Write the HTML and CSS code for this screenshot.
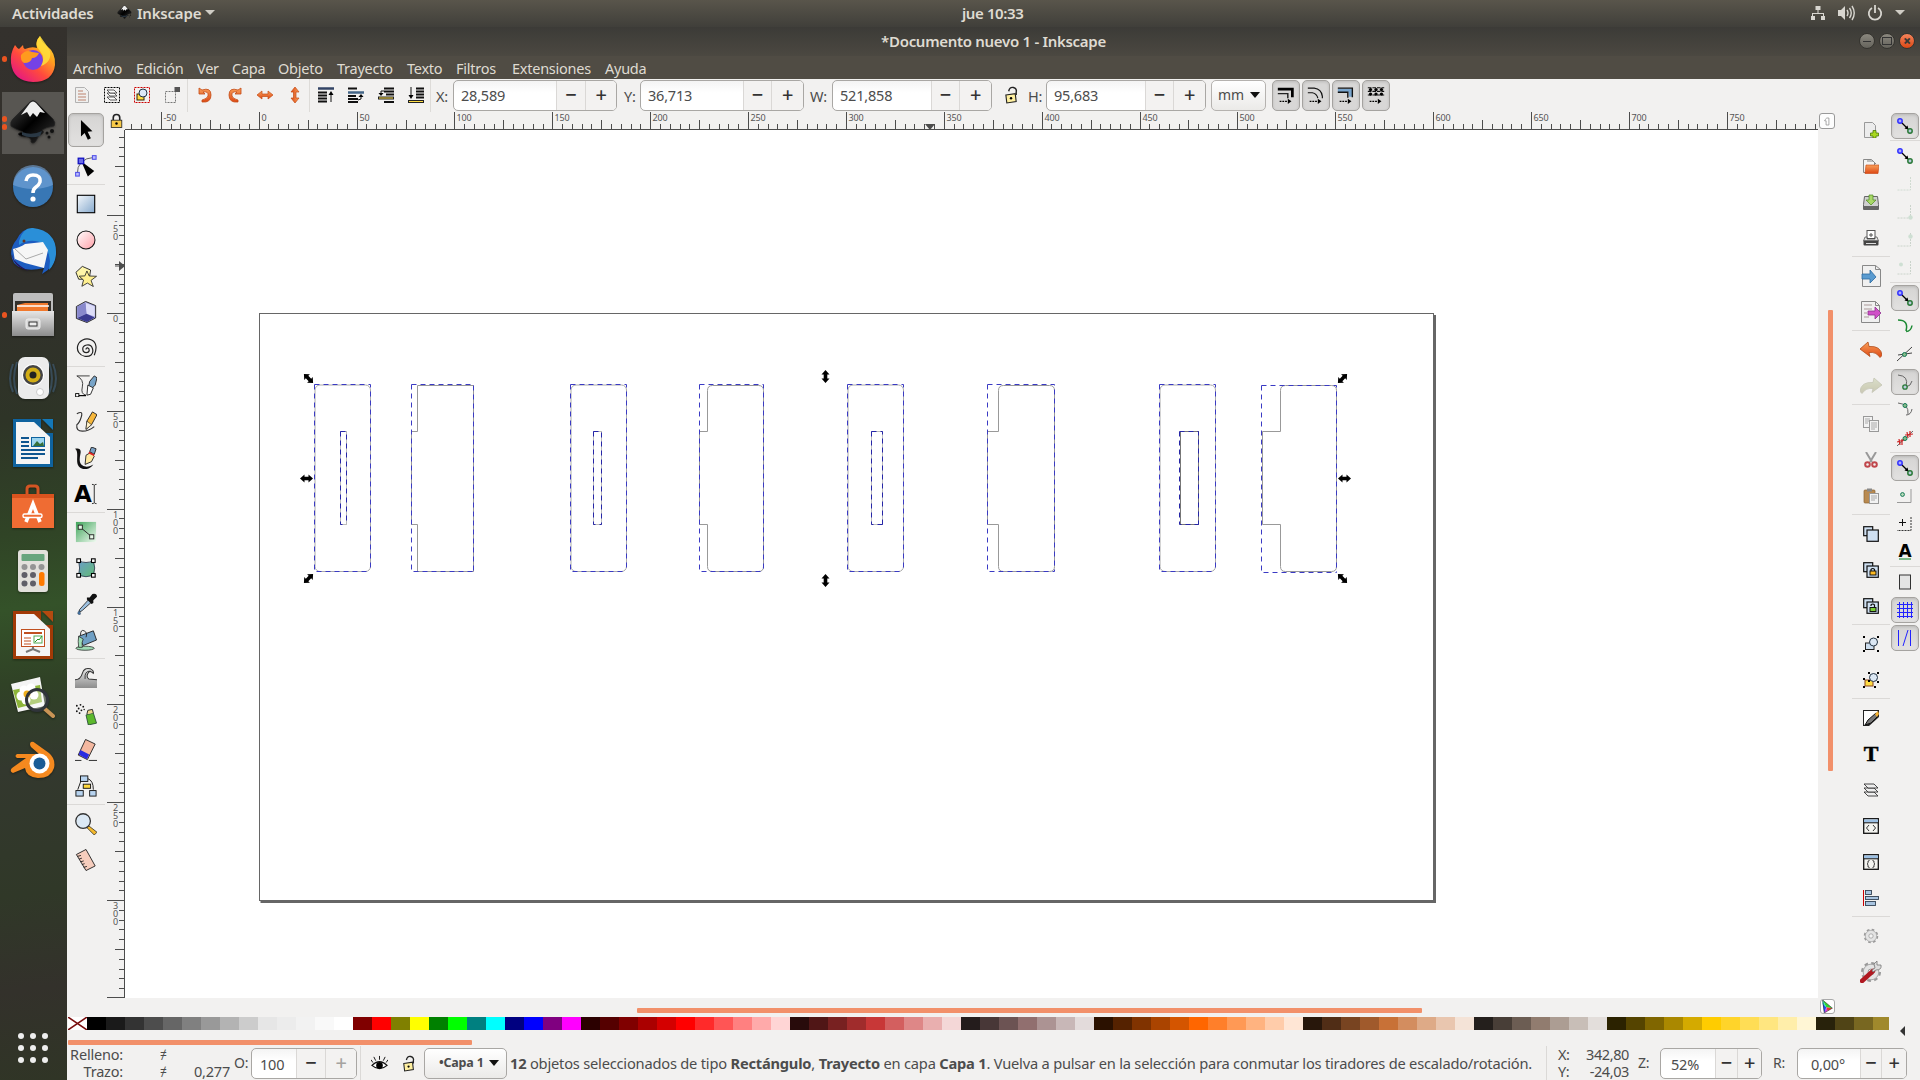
FILE: index.html
```html
<!DOCTYPE html>
<html lang="es">
<head>
<meta charset="utf-8">
<title>*Documento nuevo 1 - Inkscape</title>
<link rel="stylesheet" href="styles.css">
</head>
<body>
<svg class="sprite" aria-hidden="true">
<defs>
<linearGradient id="gBlue" x1="0" y1="0" x2="1" y2="1"><stop offset="0" stop-color="#f4f8fc"/><stop offset="1" stop-color="#86a9cd"/></linearGradient>
<linearGradient id="gPink" x1="0" y1="0" x2="1" y2="1"><stop offset="0" stop-color="#fff"/><stop offset="1" stop-color="#ffa0a8"/></linearGradient>
<linearGradient id="gGreen" x1="0" y1="0" x2="1" y2="1"><stop offset="0" stop-color="#3fa55a"/><stop offset="1" stop-color="#f0faf0"/></linearGradient>
<linearGradient id="gMesh" x1="0" y1="0" x2="1" y2="1"><stop offset="0" stop-color="#6a9cc8"/><stop offset="1" stop-color="#62bd74"/></linearGradient>
<linearGradient id="gOrange" x1="0" y1="0" x2="0" y2="1"><stop offset="0" stop-color="#f9a05a"/><stop offset="1" stop-color="#dd4814"/></linearGradient>
<linearGradient id="gGray" x1="0" y1="0" x2="0" y2="1"><stop offset="0" stop-color="#e6e6e6"/><stop offset="1" stop-color="#8c8c8c"/></linearGradient>
<linearGradient id="gFox" x1="1" y1="0" x2="0.2" y2="1"><stop offset="0" stop-color="#fff44f"/><stop offset=".35" stop-color="#ffa51e"/><stop offset=".65" stop-color="#ff4a3d"/><stop offset="1" stop-color="#e31587"/></linearGradient>
<linearGradient id="gInk" x1="0" y1="0" x2="1" y2="1"><stop offset="0" stop-color="#444"/><stop offset=".5" stop-color="#000"/><stop offset="1" stop-color="#333"/></linearGradient>
</defs>
<symbol id="s-cursor" viewBox="0 0 24 24"><path d="M6.500 1v18l4-3.800 3.500 7.300 3.300-1.500-3.500-7.200 5.200-.5z" fill="#000"/></symbol>
<symbol id="s-node" viewBox="0 0 24 24"><path d="M2.500 21Q2 4 21 2.500" fill="none" stroke="#555"/><path d="M7 7l14 10.500-7 6z" fill="#000"/><rect x="3.500" y="3.500" width="6" height="6" fill="#6a6ae8" stroke="#1010c0" stroke-width="1.400"/><rect x=".7" y="19" width="4" height="4" fill="#bbf" stroke="#5555e8" stroke-width="1.200"/><rect x="19" y=".7" width="4" height="4" fill="#bbf" stroke="#5555e8" stroke-width="1.200"/></symbol>
<symbol id="s-rect" viewBox="0 0 24 24"><rect x="2.500" y="2.500" width="19" height="19" fill="url(#gBlue)" stroke="#000" stroke-width="1.200"/></symbol>
<symbol id="s-circle" viewBox="0 0 24 24"><circle cx="12" cy="12" r="9.800" fill="url(#gPink)" stroke="#111" stroke-width="1.100"/></symbol>
<symbol id="s-star" viewBox="0 0 24 24"><path d="M1 8L8 1.500l9 4-1.500 10L4 15.500z" fill="#fff6a8" stroke="#222"/><path d="M13 6.500l2.500 5.500 8 .3-6 4.500 2.500 6.700-6.500-3.800-6 3.500 1.800-6.800-4.800-4.200 6.300-.3z" fill="#fff090" stroke="#222" stroke-width=".9"/></symbol>
<symbol id="s-cube" viewBox="0 0 24 24"><path d="M1.500 6l10-5.500 11 4.500v13.500L13 23.500 1.500 19z" fill="#a8a8e0" stroke="#222"/><path d="M11.500 2l10 4v11l-9-3z" fill="#ddddf8"/><path d="M2.500 6l9-4 1 12-10 4z" fill="#8888cc"/><path d="M12.500 14l9 4-8.500 5-10.500-4.500z" fill="#3a3a90"/></symbol>
<symbol id="s-spiral" viewBox="0 0 24 24"><path d="M12 13.500c0-2.500 3.500-2 3.500 1s-6.500 4-7-1 8.500-7.500 10.500-1-3 9.500-8.500 8.500-9-6-7.500-11.500S11 .5 17.500 3s6.500 10 3.500 17" fill="none" stroke="#222" stroke-width="1.300"/></symbol>
<symbol id="s-pen" viewBox="0 0 24 24"><path d="M2 1h14M2 1q8 4 6 12t4 9" fill="none" stroke="#333"/><path d="M15 12l1-5 5-6 3 2-2 8-4 4z" fill="#78a4c8" stroke="#222"/><path d="M14 11l6 3-3 7-4 1z" fill="#fff" stroke="#222"/><path d="M3 22.500h9" stroke="#000" stroke-width="1.300"/><rect x=".7" y="20.300" width="3.500" height="3.500" fill="#fff" stroke="#000"/></symbol>
<symbol id="s-pencil" viewBox="0 0 24 24"><path d="M2 3q7-4 5 3t-5 9q-1 7 6 7t13-5" fill="none" stroke="#333" stroke-width="1.200"/><path d="M12 20l1-9 6-10 5 3-6 11z" fill="#f6b73c" stroke="#222"/><path d="M12 20l1-9 5 4z" fill="#fff1c8" stroke="#222" stroke-width=".7"/></symbol>
<symbol id="s-calli" viewBox="0 0 24 24"><path d="M0 2c4-1 7 0 6 5s-2 10 2 13 9 1 12-1c-4 6-12 7-16 2S5 5 0 2z" fill="#111"/><path d="M11 19l1-10 5-3 4 4-3 6z" fill="#ffe9a0" stroke="#222"/><path d="M16 5l2-5 5 2-2 6z" fill="#7aa0c4" stroke="#222"/><path d="M15 6l6 3" stroke="#d22" stroke-width="2"/></symbol>
<symbol id="s-text" viewBox="0 0 24 24"><path d="M21 2.500v19M18.500 1.500q2 0 2.500 1 .5-1 2.500-1M18.500 22.500q2 0 2.500-1 .5 1 2.500 1" stroke="#222" fill="none"/></symbol>
<symbol id="s-grad" viewBox="0 0 24 24"><rect x="1" y="1" width="22" height="22" fill="url(#gGreen)"/><path d="M6 7l12 10" stroke="#222"/><rect x="3.500" y="4.500" width="4.500" height="4.500" fill="#e8f8e8" stroke="#222"/><rect x="16" y="15" width="4.500" height="4.500" fill="#e8f8e8" stroke="#222"/></symbol>
<symbol id="s-mesh" viewBox="0 0 24 24"><path d="M4 4q8 4 16 0 3 8 0 16-8 3-16 0 2-8 0-16" fill="url(#gMesh)" stroke="#345"/><g fill="#fff" stroke="#000" stroke-width="1.200"><rect x="2" y="2" width="4" height="4"/><rect x="18" y="2" width="4" height="4"/><rect x="2" y="18" width="4" height="4"/><rect x="18" y="18" width="4" height="4"/></g></symbol>
<symbol id="s-drop" viewBox="0 0 24 24"><path d="M5 18L15 7l3 3L8 19l-3 2z" fill="#9cc0e0" stroke="#222" stroke-width=".9"/><path d="M13 5l3 0 3-4q5-1 5 3l-4 4v3l-2 1-5-5z" fill="#111"/><path d="M4.500 19q-3 4 0 4.500t0-4.500" fill="#47a" stroke="#234" stroke-width=".5"/></symbol>
<symbol id="s-bucket" viewBox="0 0 24 24"><ellipse cx="11" cy="21" rx="10" ry="2.200" fill="#9fdcb4" stroke="#222" stroke-width=".8"/><path d="M4 8l16-6 3.500 10L9 18z" fill="#6f9fc4" stroke="#222"/><path d="M4 8q-1 5 0 12l4 0q-1-6 1-9z" fill="#9fdcb4" stroke="#222" stroke-width=".8"/><path d="M6 7q0-7 4-5t2 7" fill="none" stroke="#222"/></symbol>
<symbol id="s-tweak" viewBox="0 0 24 24"><path d="M0 23v-9q6 0 8-7t9-5q4 2 3 5-4-4-6 0t1 6l9 1v9z" fill="url(#gGray)"/><path d="M0 14q6 0 8-7t9-5q4 2 3 5-4-4-6 0t1 6l9 1" fill="none" stroke="#333" stroke-width="1.100"/><path d="M11 13q-1-9 6-8.500" fill="none" stroke="#333"/></symbol>
<symbol id="s-spray" viewBox="0 0 24 24"><path d="M12 13l8-2 3.500 11-9 2z" fill="#5cb82c" stroke="#243" stroke-width=".9"/><path d="M13 12l1-4 5-1 1 4" fill="#efd68a" stroke="#222"/><g fill="#111"><circle cx="2" cy="3" r="1"/><circle cx="6" cy="2" r="1"/><circle cx="9" cy="4" r="1"/><circle cx="4" cy="6" r="1"/><circle cx="2" cy="9" r="1"/><circle cx="7" cy="8" r="1"/><circle cx="10" cy="7" r=".8"/><circle cx="5" cy="11" r="1"/></g></symbol>
<symbol id="s-eraser" viewBox="0 0 24 24"><path d="M11.500.5l10.500 5-8.500 17-10-5z" fill="#f4b8a0" stroke="#222"/><path d="M6 12l9.500 5-2.500 5-9-5z" fill="#2a2ae0"/><path d="M0 23.400h7M15 23.400h9" stroke="#222"/></symbol>
<symbol id="s-conn" viewBox="0 0 24 24"><path d="M7 5L3 16M14 4q6 2 6 12" stroke="#111" fill="none"/><g stroke="#111" fill="#b7d3ef"><rect x="6" y="1" width="8" height="6"/><rect x="1" y="17" width="8" height="6"/><rect x="16" y="17" width="7" height="6"/><rect x="9" y="10" width="8" height="4.500" fill="#ffd83c"/></g></symbol>
<symbol id="s-zoom" viewBox="0 0 24 24"><path d="M15 14l9 7-3 3-8-8z" fill="#f4b92c" stroke="#222" stroke-width=".8"/><circle cx="8.800" cy="8.800" r="8" fill="#dbe8f4" stroke="#333" stroke-width="1.400"/></symbol>
<symbol id="s-ruler" viewBox="0 0 24 24"><path d="M1.500 6L12 .5l10 18-10 5z" fill="#f6cdbd" stroke="#222"/><path d="M3 8l3.500-1M4.500 11l3-1M6 14l3.500-1M7.500 17l3-1M9.500 20l3.500-1" stroke="#222"/></symbol>
<symbol id="s-new" viewBox="0 0 16 16"><path d="M1.500.5h8l3 3v12h-11z" fill="#ececec" stroke="#999"/><path d="M10 8.500h3v2.500h2.500v3H13v2h-3v-2H7.500v-3H10z" fill="#a8d820" stroke="#4a7a08" stroke-width=".8"/></symbol>
<symbol id="s-open" viewBox="0 0 16 16"><path d="M.5 1.500h8l3 3v10H.5z" fill="#f4f4f4" stroke="#888"/><path d="M4 3h6l3 3" stroke="#888" fill="none"/><path d="M3 7h13l-1 8.500H2z" fill="url(#gOrange)" stroke="#c8430e" stroke-width=".6"/></symbol>
<symbol id="s-save" viewBox="0 0 16 16"><path d="M1.500 2.500h13l1 8v5H.5v-5z" fill="#d0d0d0" stroke="#666"/><path d="M1 12h14v3H1z" fill="#666"/><path d="M6 1h4v5h3l-5 5-5-5h3z" fill="#a8d868" stroke="#4f8a20" stroke-width=".7"/></symbol>
<symbol id="s-print" viewBox="0 0 16 16"><rect x="4" y=".5" width="8" height="8" fill="#fff" stroke="#555"/><path d="M8 3v4M6 5h4" stroke="#555"/><path d="M2 7h2v2h8V7h2l1.500 4H.5z" fill="#e4e4e4" stroke="#444" stroke-width=".7"/><rect x=".5" y="10.500" width="15" height="5" rx="1" fill="#444"/><path d="M3 13.500h10" stroke="#ddd"/></symbol>
<symbol id="s-import" viewBox="0 0 20 22"><path d="M1.500.5h13l5 4v17h-18z" fill="#f0f0f0" stroke="#888"/><path d="M14.500.5v4h5" fill="none" stroke="#888"/><path d="M1 9h8V5l6 7-6 6v-4H1z" fill="#5a9bd0" stroke="#2c6aa0" stroke-width=".8"/></symbol>
<symbol id="s-export" viewBox="0 0 20 22"><path d="M.5.500h14l4 4v17H.500z" fill="#f0f0f0" stroke="#888"/><path d="M14.500.5v4h4" fill="none" stroke="#888"/><path d="M3 4h8M3 8h8M3 12h3M3 16h5" stroke="#a99"/><path d="M7 10h7V6l6 6-6 6v-4H7z" fill="#d050c8" stroke="#903090" stroke-width=".8"/></symbol>
<symbol id="s-undo" viewBox="0 0 22 16"><path d="M0 7l8-7 1 4.500q12-1 13 9l-2 2q-4-6-11-5l1 4z" fill="url(#gOrange)" stroke="#b04a18" stroke-width=".8"/></symbol>
<symbol id="s-copy" viewBox="0 0 16 16"><g fill="#f2f2f2" stroke="#999"><rect x=".5" y=".5" width="9" height="11"/><rect x="6.500" y="4.500" width="9" height="11"/></g><path d="M2 3h5M2 5h4M2 7h3M8 7h6M8 9h6M8 11h6M8 13h4" stroke="#aaa"/></symbol>
<symbol id="s-cut" viewBox="0 0 16 16"><path d="M3 0l6 10M13 0L7 10" stroke="#999" stroke-width="2"/><g fill="none" stroke="#c0474c" stroke-width="2"><circle cx="4.500" cy="12.500" r="2.300"/><circle cx="11.500" cy="12.500" r="2.300"/></g></symbol>
<symbol id="s-paste" viewBox="0 0 16 16"><rect x="1" y="2" width="11" height="13" rx="1" fill="#b98a50" stroke="#8a6230" stroke-width=".7"/><rect x="4" y=".5" width="5" height="3" fill="#888"/><rect x="6.500" y="5.500" width="9" height="10" fill="#f2f2f2" stroke="#999"/><path d="M8 8h6M8 10h6M8 12h4" stroke="#aaa"/></symbol>
<symbol id="s-dup" viewBox="0 0 16 16"><g fill="#cfe0f2" stroke="#111" stroke-width="1.200"><rect x=".7" y=".7" width="9" height="9"/><rect x="4" y="4" width="11.300" height="11.300"/></g></symbol>
<symbol id="s-clone" viewBox="0 0 16 16"><use href="#s-dup"/><path d="M8 9V7.500q1.800-2 3.500 0V9" fill="none" stroke="#111" stroke-width="1.200"/><rect x="7" y="9" width="6" height="4" fill="#fb2" stroke="#111"/></symbol>
<symbol id="s-unlink" viewBox="0 0 16 16"><use href="#s-dup"/><path d="M8 8V7q1.800-2 3.500 0V9" fill="none" stroke="#111" stroke-width="1.200"/><rect x="7" y="9.500" width="6" height="4" fill="#7c3" stroke="#111"/></symbol>
<symbol id="s-group" viewBox="0 0 16 16"><rect x="2.500" y="7" width="8.500" height="6.500" fill="#cde" stroke="#222"/><circle cx="10.500" cy="6" r="4" fill="#dce8f4" stroke="#234"/><path d="M0 0h2v2H0zM14 0h2v2h-2zM0 14h2v2H0zM14 14h2v2h-2z"/></symbol>
<symbol id="s-ungroup" viewBox="0 0 16 16"><rect x="2" y="8" width="8" height="6" fill="#fd4" stroke="#842"/><circle cx="10.500" cy="5.500" r="4" fill="#dce8f4" stroke="#234"/><path d="M0 6h2v2H0zM5 0h2v2H5zM14 0h2v2h-2zM0 14h2v2H0zM11 14h2v2h-2zM14 9h2v2h-2zM5 8h2v2H5z"/></symbol>
<symbol id="s-fill" viewBox="0 0 16 16"><rect width="16" height="16" fill="#222"/><path d="M1 1h14L5 14l-4 1z" fill="#fff"/><path d="M16 7v9H6z" fill="#f2f1f0"/><path d="M2 15l3-5 8-7 2 3-7 7z" fill="#777" stroke="#111" stroke-width="1"/><path d="M12 4l3-3 1 3-2 3z" fill="#f4b030"/></symbol>
<symbol id="s-layers" viewBox="0 0 16 14"><g fill="#eee" stroke="#333" stroke-width=".9"><path d="M1 9h10l4 4H5z"/><path d="M1 5h10l4 4H5z"/><path d="M1 1h10l4 4H5z"/></g></symbol>
<symbol id="s-xml" viewBox="0 0 16 16"><rect x=".7" y=".7" width="14.600" height="14.600" fill="#f4f4f0" stroke="#111" stroke-width="1.300"/><path d="M1 1.500h14v3H1z" fill="#9cc0e4"/><path d="M1 4.800h14" stroke="#111"/><path d="M6 7L3.500 10 6 13M10 7l2.500 3-2.500 3" fill="none" stroke="#333"/></symbol>
<symbol id="s-css" viewBox="0 0 16 16"><rect x=".7" y=".7" width="14.600" height="14.600" fill="#f4f4f0" stroke="#111" stroke-width="1.300"/><path d="M1 1.500h14v3H1z" fill="#9cc0e4"/><path d="M1 4.800h14" stroke="#111"/><path d="M6.500 6.500q-2 0-1.500 2 0 1-1 1.500 1 0 1 1.500-.5 2 1.500 2M9.500 6.500q2 0 1.500 2 0 1 1 1.500-1 0-1 1.500.5 2-1.500 2" fill="none" stroke="#333"/></symbol>
<symbol id="s-align" viewBox="0 0 16 16"><path d="M.5 0v16" stroke="#c00"/><g fill="#a8c4e0" stroke="#345" stroke-width=".9"><rect x="2.500" y=".5" width="6" height="4"/><rect x="2.500" y="6.500" width="13" height="3"/><rect x="2.500" y="11.500" width="10" height="4"/></g></symbol>
<symbol id="s-gear" viewBox="0 0 22 22"><circle cx="11" cy="11" r="8.500" fill="#e0e0e0" stroke="#999" stroke-width="3" stroke-dasharray="3.500 3.170"/><circle cx="11" cy="11" r="7.800" fill="#e4e4e4" stroke="#aaa"/><circle cx="11" cy="11" r="3" fill="#f4f4f4" stroke="#999"/></symbol>
<symbol id="s-prefs" viewBox="0 0 22 22"><use href="#s-gear"/><path d="M2 20L13 10" stroke="#b01820" stroke-width="4.500" stroke-linecap="round"/><path d="M12 9l3-2-1-4 3-3 0 4 4 0q1 5-5 5l-3 2z" fill="#ddd" stroke="#777" stroke-width=".8"/></symbol>
<symbol id="s-snap" viewBox="0 0 16 16"><path d="M4 4l7 7" stroke="#000" stroke-width="1.200"/><path d="M11.500 11.500l-4-1 3-3z"/><circle cx="3" cy="3" r="2.200" fill="#aaf" stroke="#33f" stroke-width="1.500"/><circle cx="13" cy="13" r="2.200" fill="#bcd" stroke="#2a7a38" stroke-width="1.500"/></symbol>
<symbol id="s-bb1" viewBox="0 0 16 16"><path d="M13.500 1v13H0" fill="none" stroke="#a9c2ad" stroke-dasharray="2 1"/></symbol>
<symbol id="s-bb2" viewBox="0 0 16 16"><path d="M13.500 1v13H0" fill="none" stroke="#9bb09f" stroke-dasharray="2 1"/><circle cx="13.500" cy="13.500" r="2.200" fill="#a4cbb0"/></symbol>
<symbol id="s-bb3" viewBox="0 0 16 16"><path d="M13.500 1v13H0" fill="none" stroke="#9bb09f" stroke-dasharray="2 1"/><circle cx="13.500" cy="4.500" r="2.200" fill="#a4cbb0"/></symbol>
<symbol id="s-bb4" viewBox="0 0 16 16"><path d="M13.500 1v13H0" fill="none" stroke="#9bb09f" stroke-dasharray="2 1"/><circle cx="4" cy="4.500" r="2" fill="#a4cbb0"/></symbol>
<symbol id="s-path" viewBox="0 0 16 16"><path d="M1 2q11 0 8 11M9 13.500q5 0 6-6" fill="none" stroke="#1c8a34" stroke-width="1.500"/></symbol>
<symbol id="s-inter" viewBox="0 0 16 16"><path d="M0 15L15 1M1 9l14-2" stroke="#444" fill="none"/><circle cx="7.500" cy="8.500" r="2" fill="#8b8" stroke="#175" /></symbol>
<symbol id="s-cusp" viewBox="0 0 16 16"><path d="M1 1q11 1 8 11M9 13q5-1 6-6" fill="none" stroke="#666"/><circle cx="8" cy="13" r="2.200" fill="#bcd" stroke="#2a7a38" stroke-width="1.300"/></symbol>
<symbol id="s-smooth" viewBox="0 0 16 16"><path d="M1 1q11 1 10 11M9 13q5 0 6-6" fill="none" stroke="#666"/><circle cx="8" cy="3.500" r="2" fill="#8b8" stroke="#175"/></symbol>
<symbol id="s-mid" viewBox="0 0 16 16"><path d="M0 16L16 1" stroke="#666"/><path d="M2 9l1 6M5 9l0 6M10 2l1 6M13 1l0 6M0 12l7-2M8 5l8-1" stroke="#c22" stroke-width="1.200"/><circle cx="8" cy="8.500" r="2" fill="#8b8" stroke="#175"/></symbol>
<symbol id="s-center" viewBox="0 0 16 16"><path d="M14 1v13.500H0" fill="none" stroke="#999"/><circle cx="5.500" cy="6.500" r="1.900" fill="#bdb" stroke="#175"/></symbol>
<symbol id="s-rot" viewBox="0 0 16 16"><path d="M14 1v13.500H0" fill="none" stroke="#333" stroke-dasharray="2 1"/><path d="M5.500 3v7M2 6.500h7" stroke="#111"/></symbol>
<symbol id="s-page" viewBox="0 0 16 16"><rect x="2.500" y="1" width="11" height="14" fill="#e4e4e4" stroke="#333"/></symbol>
<symbol id="s-grid" viewBox="0 0 16 16"><path d="M2.500 0v16M6.500 0v16M10.500 0v16M14.500 0v16M0 2.500h16M0 6.500h16M0 10.500h16M0 14.500h16" stroke="#22f"/></symbol>
<symbol id="s-guide" viewBox="0 0 16 16"><path d="M1.500 0v16M13.500 0v16M11 0L6 16" stroke="#22f" fill="none"/></symbol>
<symbol id="s-rotl" viewBox="0 0 16 16"><path d="M2 1v6h6L6 5q6-1 5 4-1 3-6 4v2q9 1 9-7T5 3z" fill="url(#gOrange)" stroke="#c44a14" stroke-width=".8"/></symbol>
<symbol id="s-flip" viewBox="0 0 16 16"><path d="M0 8l5-4v3h6V4l5 4-5 4V9.500H5V12z" fill="url(#gOrange)" stroke="#c44a14" stroke-width=".7"/></symbol>
<symbol id="s-sh" viewBox="0 0 22 22"><path d="M4 18h9" stroke="#000" stroke-width="1.300" stroke-dasharray="2 1"/><path d="M13 15l4 3-4 3z"/></symbol>
<symbol id="s-lock" viewBox="0 0 16 18"><path d="M4 8V5q0-4 4-4t4 4v3" fill="none" stroke="#222" stroke-width="2"/><rect x="1.500" y="8" width="13" height="9" fill="#f7c948" stroke="#222"/><circle cx="8" cy="12" r="1.500"/></symbol>
<symbol id="s-unlock" viewBox="0 0 16 18"><path d="M5 5q1-5 5-4t3 5v3" fill="none" stroke="#222" stroke-width="1.500"/><path d="M2 9l10-1.500 1 8.500-10 1.500z" fill="#fff0a0" stroke="#222" stroke-width="1.200"/><circle cx="7.500" cy="12.500" r="1.300"/></symbol>
<symbol id="s-ink" viewBox="0 0 48 48"><path d="M21 3q3-3 6 0l17 17q3 4 1 7-8 1-12 4 3 2 0 4-4 1-5 5-3 6-6 3 1-4-4-5-7 0-9-3 2-2 5-2-8-3-12-6-1-4 2-7z" fill="url(#gInk)" stroke="#222" stroke-width=".7"/><path d="M21 4q3-3 6 0l9 10-5-1-3 5-4-4-3 4-3-5-6 3z" fill="#eee"/><path d="M13 33q10 4 20-1l-2 5q-10 3-18-1z" fill="#2a3844"/><circle cx="38" cy="34" r="1.500" fill="#111"/><circle cx="43" cy="32" r="2" fill="#111"/><circle cx="40" cy="38" r="1.500" fill="#111"/></symbol>
</svg>

<header class="panel">
  <span class="activities">Actividades</span>
  <svg class="app-ink"><use href="#s-ink"/></svg>
  <span class="app-name">Inkscape</span><i class="tri"></i>
  <span class="clock">jue 10:33</span>
  <div class="tray">
    <svg width="16" height="16" viewBox="0 0 16 16"><path d="M5.500 1h5v4h-5zM1 11h4v4H1zM11 11h4v4h-4zM7.500 5h1v3H14v3h-1V9H3v2H2V8h5.500z" fill="#d8d6d0"/></svg>
    <svg width="17" height="16" viewBox="0 0 17 16"><path d="M0 5h3l4-4v14l-4-4H0z" fill="#d8d6d0"/><path d="M9 5q2 3 0 6M11.500 3q3.500 5 0 10M14 1q4.500 7 0 14" fill="none" stroke="#d8d6d0" stroke-width="1.400"/></svg>
    <svg width="16" height="16" viewBox="0 0 16 16"><path d="M5 3a6.200 6.200 0 1 0 6 0M8 0v8" fill="none" stroke="#d8d6d0" stroke-width="1.800"/></svg>
    <i class="tri"></i>
  </div>
</header>

<div class="desktop">
<nav class="dock">
  <div class="launcher run1"><svg viewBox="0 0 48 48"><path d="M6 10q2 3 4 4l4-4q0 3 2 4 7-3 12-1Q26 6 31 1q1 6 7 10 9 7 8 19Q44 47 24 47 4 46 2 28q-1-10 4-18z" fill="url(#gFox)"/><circle cx="24" cy="25" r="10" fill="#7542e5"/><path d="M12 20q5-6 11-3l7 1q-2 5-7 5-1 5-8 5-4-3-3-8z" fill="#ff9a1e"/><path d="M31 1q-7 8 0 15 6 7 1 15 11-4 9-15-4-7-10-15z" fill="#ffdf3c" opacity=".85"/></svg></div>
  <div class="launcher run2 active"><svg viewBox="0 0 48 48"><use href="#s-ink"/></svg></div>
  <div class="launcher"><svg viewBox="0 0 48 48"><circle cx="24" cy="24" r="20" fill="#3877b5"/><path d="M4 22a20 20 0 0 1 40 0q-20 8-40 0" fill="#79a8dc" opacity=".6"/><path d="M17 18q1-6 7-6 8 0 7 7-1 3-4 5t-3 6" fill="none" stroke="#fff" stroke-width="3.500"/><circle cx="24" cy="36" r="2.600" fill="#fff"/></svg></div>
  <div class="launcher"><svg viewBox="0 0 48 48"><path d="M8 12Q14 0 24 2q22 2 23 24-1 14-14 21l2-6Q14 46 5 36-2 24 8 12z" fill="#1d5cc0"/><path d="M10 14Q14 0 24 1q24 3 23 26-1 10-7 16l1-9q-2-19-15-20-9-1-16 4z" fill="#2a8fd8"/><path d="M6 34L4 22q8-2 12-5l18-2 5 8-4 18-19-5-10-4z" fill="#f6f6f6"/><path d="M6 22l11 10 17-6" fill="none" stroke="#aaa"/><path d="M3 27Q4 40 20 44q-9-4-15-11z" fill="#26135c"/><circle cx="15" cy="14" r="1.500" fill="#632"/></svg></div>
  <div class="launcher run1"><svg viewBox="0 0 48 48"><path d="M4 4q0-2 2-2h36q2 0 2 2v39H4z" fill="#bdbdbd"/><path d="M6 10h36v12H6z" fill="#33302b"/><path d="M8 14l8-2h23v10H8z" fill="#f1792d"/><path d="M8 15h32" stroke="#fff" stroke-width="1.500"/><path d="M3 20h42v25H3z" fill="url(#gGray)"/><rect x="17" y="28" width="14" height="10" rx="2" fill="#d8d8d8" stroke="#eee"/><rect x="20" y="31" width="8" height="4" fill="#eee" stroke="#333"/></svg></div>
  <div class="launcher"><svg viewBox="0 0 48 48"><path d="M4 9q-6 15 0 28M8 7q-6 17 0 32M44 9q6 15 0 28M40 7q6 17 0 32" fill="none" stroke="#43617c" stroke-width="2" opacity=".6"/><rect x="9" y="2" width="31" height="42" rx="7" fill="#ebebeb"/><circle cx="24" cy="20" r="11" fill="#fff"/><circle cx="24" cy="20" r="10" fill="#444"/><circle cx="24" cy="20" r="7.500" fill="#d2ad16"/><circle cx="24" cy="20" r="3.500" fill="#222"/><circle cx="31" cy="37" r="3.500" fill="#fff" stroke="#ccc"/></svg></div>
  <div class="launcher"><svg viewBox="0 0 48 48"><path d="M4 0h28v14h12v34H4z" fill="#0f639f"/><path d="M7 3h18l16 15v27H7z" fill="#f4f4f4"/><path d="M33 0h11v11z" fill="#1478b8"/><path d="M12 19h8M12 23h8M12 27h8M12 31h24M12 35h24M12 39h17" stroke="#0f5690" stroke-width="1.800"/><rect x="22.500" y="18.500" width="13" height="9" fill="#9cd4ee" stroke="#0f639f"/><path d="M24 27l4-5 3 3 3-2 1 4z" fill="#356f3a"/></svg></div>
  <div class="launcher"><svg viewBox="0 0 48 48"><path d="M3 11h42v34H3z" fill="#ef6c33"/><path d="M3 11h42v4H3z" fill="#d9531e"/><path d="M18 14V6q0-3 3-3h5q3 0 3 3v8" fill="none" stroke="#d45523" stroke-width="3"/><path d="M17 39l7-18 7 18" fill="none" stroke="#fff" stroke-width="3.600"/><rect x="14" y="31" width="19" height="3.500" rx="1.500" fill="#ef6c33" stroke="#fff" stroke-width="1.400"/></svg></div>
  <div class="launcher"><svg viewBox="0 0 48 48"><rect x="9" y="3" width="30" height="42" rx="3" fill="#e3e1dc"/><rect x="12.500" y="7" width="23" height="7" rx="1" fill="#68a57d"/><g fill="#949494"><circle cx="15.500" cy="20" r="3"/><circle cx="24" cy="20" r="3"/><circle cx="32.500" cy="20" r="3"/></g><g fill="#605f68"><circle cx="15.500" cy="28" r="3"/><circle cx="24" cy="28" r="3"/><circle cx="15.500" cy="36.500" r="3"/><circle cx="24" cy="36.500" r="3"/></g><rect x="30" y="25" width="5.500" height="14" rx="2.500" fill="#ff7a00"/></svg></div>
  <div class="launcher"><svg viewBox="0 0 48 48"><path d="M4 0h28v14h12v34H4z" fill="#a23a06"/><path d="M7 3h18l16 15v27H7z" fill="#f4f4f4"/><path d="M33 0h11v11z" fill="#b34a10"/><rect x="12.500" y="18.500" width="23" height="17" fill="#fff" stroke="#c05020"/><path d="M15 22h18" stroke="#c05020" stroke-width="2"/><path d="M15 27h7M15 30h7M15 33h7" stroke="#c05020"/><rect x="25" y="25" width="8" height="7" fill="#fff" stroke="#5a5"/><path d="M26 31l3-3 1 1 3-4" stroke="#292" fill="none"/><path d="M24 36v3M17 41l7-3 7 3" stroke="#777" stroke-width="2" fill="none"/></svg></div>
  <div class="launcher"><svg viewBox="0 0 48 48"><path d="M2 9l29-7 5 29-27 6z" fill="#f4f4f4"/><path d="M4 15l27-5 2 17-24 6z" fill="#8cb43a"/><g fill="#fff"><circle cx="15" cy="15" r="4.500"/><circle cx="22" cy="13" r="4.500"/><circle cx="12" cy="21" r="4.500"/><circle cx="17" cy="25" r="4.500"/><circle cx="25" cy="20" r="4.500"/></g><circle cx="18" cy="19" r="3.500" fill="#f0b020"/><path d="M36 34l8 7" stroke="#c99455" stroke-width="4" stroke-linecap="round"/><circle cx="28" cy="25" r="10.500" fill="#fff" fill-opacity=".35" stroke="#30343a" stroke-width="3"/></svg></div>
  <div class="launcher"><svg viewBox="0 0 48 48"><path d="M22 3q2-1 4 1l14 10q7 6 5 15-3 10-16 10-12-1-13-10L4 34q-4-2-1-5l14-10H8q-3-2 0-4l22 0-8-7q-2-3 0-5z" fill="#f5891f"/><circle cx="30.500" cy="24.500" r="10" fill="#fff"/><circle cx="30.500" cy="24.500" r="6" fill="#1a5c96"/></svg></div>
  <div class="apps"><i></i><i></i><i></i><i></i><i></i><i></i><i></i><i></i><i></i></div>
</nav>

<main class="window">
  <div class="titlebar"><span class="title">*Documento nuevo 1 - Inkscape</span>
    <div class="winbtns"><b class="min"></b><b class="max"></b><b class="close">×</b></div></div>
  <div class="menubar"><span style="width:63px">Archivo</span><span style="width:61px">Edición</span><span style="width:35px">Ver</span><span style="width:46px">Capa</span><span style="width:59px">Objeto</span><span style="width:70px">Trayecto</span><span style="width:49px">Texto</span><span style="width:56px">Filtros</span><span style="width:93px">Extensiones</span><span>Ayuda</span></div>

  <div class="options">
    <div class="grp g1">
      <svg viewBox="0 0 16 16" opacity=".6"><path d="M1.500.5h9l4 4v11h-13z" fill="#eee" stroke="#888"/><path d="M4 4h5M4 7h8M4 10h8M4 13h8" stroke="#b87860" stroke-width="1.400"/></svg>
      <svg viewBox="0 0 16 16"><rect x=".5" y=".5" width="15" height="15" fill="none" stroke="#000" stroke-dasharray="2 1"/><g fill="#fff" stroke="#333" stroke-width=".8"><path d="M3 10h7l3 3H6z"/><path d="M3 6h7l3 3H6z"/><path d="M3 3h7l3 3H6z"/></g></svg>
      <svg viewBox="0 0 16 16"><rect x=".5" y=".5" width="15" height="15" fill="none" stroke="#c00" stroke-dasharray="2 1"/><rect x="3" y="7" width="7" height="6" fill="#fd4" stroke="#320"/><circle cx="9" cy="6" r="4" fill="#dde8f6" stroke="#234"/></svg>
      <svg viewBox="0 0 16 16"><rect x="1.500" y="4.500" width="10" height="11" fill="none" stroke="#777" stroke-dasharray="2 1"/><rect x="10.500" y="0" width="5.500" height="5" fill="#555"/></svg>
    </div>
    <div class="grp g2">
      <svg><use href="#s-rotl"/></svg><svg class="mirror"><use href="#s-rotl"/></svg><svg><use href="#s-flip"/></svg><svg class="quarter"><use href="#s-flip"/></svg>
    </div>
    <div class="grp g3">
      <svg viewBox="0 0 16 16"><path d="M0 1.500h16" stroke="#346" stroke-width="2.500"/><path d="M0 5.500h9M0 8.500h9M0 11.500h9M0 14.500h9" stroke="#111" stroke-width="2"/><path d="M13 15V6" stroke="#111"/><path d="M10.500 8L13 4l2.500 4z"/></svg>
      <svg viewBox="0 0 16 16"><path d="M0 1.500h9M0 9h8M0 12h10M0 15h10" stroke="#111" stroke-width="2"/><path d="M0 5.500h16" stroke="#468" stroke-width="2.500"/><path d="M10 13l3-1V9" stroke="#111" fill="none"/><path d="M10.500 10L13 7l2.500 3z"/></svg>
      <svg viewBox="0 0 16 16"><path d="M6 1.500h10M6 4.500h10M8 7.500h8M6 15h10" stroke="#111" stroke-width="2"/><path d="M0 11h16" stroke="#222" stroke-width="3"/><path d="M1 11h14" stroke="#fd4"/><path d="M6 4H3v3" stroke="#111" fill="none"/><path d="M.5 6L3 9l2.500-3z"/></svg>
      <svg viewBox="0 0 16 16"><path d="M8 1.500h8M8 4.500h8M8 7.500h8M8 10.500h8" stroke="#111" stroke-width="2"/><path d="M0 14.500h16" stroke="#222" stroke-width="3"/><path d="M1 14.500h14" stroke="#fd4"/><path d="M3 0v10" stroke="#111"/><path d="M.5 8L3 12l2.500-4z"/></svg>
    </div>
    <label class="lb lx">X:</label><div class="spin" style="width:164px"><span>28,589</span><i style="width:29px">−</i><i style="width:31px">+</i></div>
    <label class="lb ly">Y:</label><div class="spin" style="width:164px"><span>36,713</span><i>−</i><i class="last">+</i></div>
    <label class="lb lw">W:</label><div class="spin" style="width:160px"><span>521,858</span><i>−</i><i class="last">+</i></div>
    <svg class="ratio"><use href="#s-unlock"/></svg>
    <label class="lb lh">H:</label><div class="spin" style="width:160px"><span>95,683</span><i>−</i><i class="last">+</i></div>
    <div class="units">mm<i class="dn"></i></div>
    <div class="toggles">
      <b><svg viewBox="0 0 22 22"><path d="M2 4.500h16v9" fill="none" stroke="#000" stroke-width="3"/><path d="M2 9.500h11v5" fill="none" stroke="#222" stroke-width="1.600"/><use href="#s-sh"/></svg></b>
      <b><svg viewBox="0 0 22 22"><path d="M2 3.500h7q8 1 9 9v2M2 8.500h5q5 1 6 6" fill="none" stroke="#111" stroke-width="1.300"/><use href="#s-sh"/></svg></b>
      <b><svg viewBox="0 0 22 22"><path d="M2 4h16v9h-4V8H2z" fill="#78a4cc"/><path d="M2 3.500h16v10M2 8h11v6" fill="none" stroke="#111" stroke-width="1.500"/><use href="#s-sh"/></svg></b>
      <b><svg viewBox="0 0 22 22"><path d="M2 3h18M2 7h18M2 11h18" stroke="#111" stroke-width="1.200" stroke-dasharray="4 1"/><g><circle cx="5" cy="5" r="1.800"/><circle cx="11" cy="5" r="1.800"/><circle cx="17" cy="5" r="1.800"/><circle cx="5" cy="10" r="1.800"/><circle cx="11" cy="10" r="1.800"/><circle cx="17" cy="10" r="1.800"/></g><use href="#s-sh"/></svg></b>
    </div>
  </div>

  <div class="work">
    <div class="col tools">
      <b class="on"><svg><use href="#s-cursor"/></svg></b><b><svg><use href="#s-node"/></svg></b><hr>
      <b><svg><use href="#s-rect"/></svg></b><b><svg><use href="#s-circle"/></svg></b><b><svg><use href="#s-star"/></svg></b><b><svg><use href="#s-cube"/></svg></b><b><svg><use href="#s-spiral"/></svg></b><hr>
      <b><svg><use href="#s-pen"/></svg></b><b><svg><use href="#s-pencil"/></svg></b><b><svg><use href="#s-calli"/></svg></b><b class="letter"><span>A</span><svg><use href="#s-text"/></svg></b><hr>
      <b><svg><use href="#s-grad"/></svg></b><b><svg><use href="#s-mesh"/></svg></b><b><svg><use href="#s-drop"/></svg></b><b><svg><use href="#s-bucket"/></svg></b><hr>
      <b><svg><use href="#s-tweak"/></svg></b><b><svg><use href="#s-spray"/></svg></b><b><svg><use href="#s-eraser"/></svg></b><b><svg><use href="#s-conn"/></svg></b><hr>
      <b><svg><use href="#s-zoom"/></svg></b><b><svg><use href="#s-ruler"/></svg></b>
    </div>
    <div class="corner"><svg><use href="#s-lock"/></svg></div>
    <svg class="hruler" id="hruler" width="1693" height="18"></svg>
    <div class="sticky"><b><svg viewBox="0 0 10 12"><path d="M1 4l3-3h3v10H3V5H1z" fill="#fff" stroke="#888"/></svg></b></div>
    <svg class="vruler" id="vruler" width="20" height="868"></svg>
    <svg class="canvas" id="canvas" width="1693" height="868" viewBox="125 130 1693 868"></svg>
    <div class="vscroll"><i></i></div>
    <div class="col cmds">
      <b><svg><use href="#s-new"/></svg></b><b><svg><use href="#s-open"/></svg></b><b><svg><use href="#s-save"/></svg></b><b><svg><use href="#s-print"/></svg></b><hr>
      <b class="big"><svg><use href="#s-import"/></svg></b><b class="big"><svg><use href="#s-export"/></svg></b><hr>
      <b class="big"><svg><use href="#s-undo"/></svg></b><b class="big redo"><svg><use href="#s-undo"/></svg></b><hr>
      <b><svg><use href="#s-copy"/></svg></b><b><svg><use href="#s-cut"/></svg></b><b><svg><use href="#s-paste"/></svg></b><hr>
      <b><svg><use href="#s-dup"/></svg></b><b><svg><use href="#s-clone"/></svg></b><b><svg><use href="#s-unlink"/></svg></b><hr>
      <b><svg><use href="#s-group"/></svg></b><b><svg><use href="#s-ungroup"/></svg></b><hr>
      <b><svg><use href="#s-fill"/></svg></b><b class="tee">T</b><b><svg><use href="#s-layers"/></svg></b><b><svg><use href="#s-xml"/></svg></b><b><svg><use href="#s-css"/></svg></b><b><svg><use href="#s-align"/></svg></b><hr>
      <b><svg><use href="#s-gear"/></svg></b><b class="big"><svg><use href="#s-prefs"/></svg></b>
    </div>
    <div class="col snaps">
      <b class="on"><svg><use href="#s-snap"/></svg></b><hr>
      <b><svg><use href="#s-snap"/></svg></b><b class="dim"><svg><use href="#s-bb1"/></svg></b><b class="dim"><svg><use href="#s-bb2"/></svg></b><b class="dim"><svg><use href="#s-bb3"/></svg></b><b class="dim"><svg><use href="#s-bb4"/></svg></b><hr>
      <b class="on"><svg><use href="#s-snap"/></svg></b><b><svg><use href="#s-path"/></svg></b><b><svg><use href="#s-inter"/></svg></b><b class="on"><svg><use href="#s-cusp"/></svg></b><b><svg><use href="#s-smooth"/></svg></b><b><svg><use href="#s-mid"/></svg></b><hr>
      <b class="on"><svg><use href="#s-snap"/></svg></b><b><svg><use href="#s-center"/></svg></b><b><svg><use href="#s-rot"/></svg></b><b class="ay"><span>A</span></b><hr>
      <b><svg><use href="#s-page"/></svg></b><b class="on"><svg><use href="#s-grid"/></svg></b><b class="on"><svg><use href="#s-guide"/></svg></b>
    </div>
  </div>

  <div class="hstrip"><i></i><b class="cms"><svg viewBox="0 0 16 16"><path d="M2 0l4.500 9L14 10z" fill="#2cd82c"/><path d="M14 10L6.500 9 8 13.500z" fill="#f03030"/><path d="M8 13.500L4 16l2.500-7z" fill="#d03ae0"/><path d="M2 4l2 12 2.500-7z" fill="#2050f0"/><path d="M2 0v5l4.500 4z" fill="#20d8c0"/><path d="M2 0l12 10-10 6z" fill="none" stroke="#222" stroke-width=".7"/></svg></b></div>
  <div class="palrow"><div class="swatches" id="palette"><svg viewBox="0 0 19 13"><rect width="19" height="13" fill="#fff"/><path d="M0 0l19 13M19 0L0 13" stroke="#7a0f0f" stroke-width="1.500"/></svg></div><i class="palarrow"></i></div>
  <div class="palscroll"><i></i></div>

  <footer class="status">
    <div class="style"><span class="k">Relleno:</span><span class="ne">≠</span><span></span><span class="k">Trazo:</span><span class="ne">≠</span><span class="sw">0,277</span></div>
    <label class="lo">O:</label>
    <div class="spin" style="width:106px"><span class="o">100</span><i style="width:29px">−</i><i class="off" style="width:31px">+</i></div>
    <u></u>
    <svg class="eye" viewBox="0 0 18 18"><path d="M1 11q8-8 16 0-8 7-16 0z" fill="#fff" stroke="#111" stroke-width="1.300"/><circle cx="9" cy="11" r="3.500"/><path d="M2 8L0 5M5 6L3 2M9 5V1M13 6l2-4M16 8l2-3" stroke="#111"/></svg>
    <svg class="lk"><use href="#s-unlock"/></svg>
    <div class="layer">•Capa 1<i class="dn"></i></div>
    <p class="msg"><b>12</b> objetos seleccionados de tipo <b>Rectángulo</b>, <b>Trayecto</b> en capa <b>Capa 1</b>. Vuelva a pulsar en la selección para conmutar los tiradores de escalado/rotación.</p>
    <u></u>
    <div class="coords"><span>X:</span><span>342,80</span><span>Y:</span><span>-24,03</span></div>
    <label class="lz">Z:</label><div class="spin" style="width:102px"><span class="z">52%</span><i style="width:22px">−</i><i style="width:24px">+</i></div>
    <label class="lr">R:</label><div class="spin" style="width:110px"><span class="r">0,00°</span><i style="width:21px">−</i><i style="width:25px">+</i></div>
  </footer>
</main>
</div>
<script src="main.js"></script>
</body>
</html>
```
FILE: styles.css
```css
*{box-sizing:border-box}
body{margin:0;width:1920px;height:1080px;overflow:hidden;font:14px/18px "Noto Sans","Open Sans",sans-serif;letter-spacing:-.2px;color:#4c4c4c;background:#f2f1f0}
i,u{font-style:normal;text-decoration:none}
.sprite{position:absolute;width:0;height:0}
.panel{height:27px;display:flex;align-items:center;position:relative;padding:0 0 2px 12px;background:linear-gradient(#59554b,#403f3a);color:#dfdbd2;font-weight:600;font-size:15px}
.activities{width:105px;letter-spacing:-.25px}
.app-ink{width:15px;height:17px;margin-right:5px}
.app-name{width:68px}
.tri{border:5px solid transparent;border-top-color:#d0cdc5;border-bottom:0}
.clock{position:absolute;left:962px;width:68px;white-space:nowrap;letter-spacing:-.4px}
.tray{margin-left:auto;display:flex;align-items:center;gap:12px;padding-right:15px}
.desktop{display:flex;height:1053px}
.dock{width:67px;flex:none;display:flex;flex-direction:column;background:linear-gradient(173deg,#34312d 0,#31302b 25%,#2e3427 37%,#304426 48%,#345229 55%,#304226 62%,#33382e 70%,#303828 82%,#33312b 91%,#303526 100%)}
.launcher{height:64px;display:flex;align-items:center;justify-content:center;position:relative;flex:none;padding-right:2px}
.launcher svg{width:50px;height:48px;filter:drop-shadow(0 1px 1px #0006)}
.launcher.active{background:linear-gradient(#585652,#585652) 2px 1px/62px 62px no-repeat}
.run1::before,.run2::before{content:"";position:absolute;left:2px;top:29px;width:5px;height:6px;border-radius:3px;background:#e95420}
.run2::before{top:25px;box-shadow:0 8px #e95420}
.apps{margin:auto auto 17px 18px;display:grid;grid-template-columns:repeat(3,6px);gap:6px}
.apps i{width:6px;height:6px;border-radius:3px;background:#eee}
.window{width:1853px;display:flex;flex-direction:column}
.titlebar{height:29px;display:flex;align-items:center;position:relative;justify-content:center;padding-bottom:2px;background:linear-gradient(#3c3b37,#4b4841);color:#dfdbd2;font-weight:600;font-size:15px}
.title{letter-spacing:-.3px}
.winbtns{position:absolute;right:5px;top:6px;display:flex;gap:4px}
.winbtns b{width:16px;height:16px;border-radius:8px;background:linear-gradient(#8b887f,#65635c);border:1px solid #35342f;display:grid;place-items:center;color:#3a3935;font-size:14px;line-height:10px}
.min::after{content:"";width:8px;height:1px;background:#333}
.max::after{content:"";width:8px;height:6px;border:1px solid #333}
.winbtns .close{background:linear-gradient(#f4845c,#dd4814)}
.menubar{height:23px;display:flex;padding:3px 0 0 6px;background:#504c44;color:#dfdbd2;font-size:14.5px;letter-spacing:-.25px}
.options{height:33px;display:flex;align-items:center;padding-bottom:1px}
.grp{display:flex;gap:14px;height:33px;align-items:center;border-right:1px solid #dddbd8;flex:none}
.grp svg{width:16px;height:16px}
.g1{width:121px;padding-left:7px}.g2{width:122px;padding-left:9px}.g3{width:121px;padding-left:8px}
.mirror{transform:scaleX(-1)}.quarter{transform:rotate(90deg)}
.lb{flex:none;padding-top:2px;font-size:14.5px}
.lx{width:22px;padding-left:5px}.ly{width:23px;padding-left:7px}.lw{width:28px;padding-left:6px}.lh{width:27px;padding-left:9px}
.spin{height:31px;display:flex;flex:none;border:1px solid #a9a7a4;border-radius:5px;overflow:hidden;background:linear-gradient(#f4f4f4,#fff 40%);font-size:14.5px}
.spin span{flex:1;padding:5px 0 0 7px}
.spin i{width:28px;border-left:1px solid #dad8d6;background:#f3f2f1;display:grid;place-items:center;font-size:20px;font-weight:500;color:#333}
.spin .last{width:32px}
.spin .off{color:#a5a3a0}
.ratio{width:15px;height:18px;margin:0 0 0 12px}
.units{width:55px;height:31px;margin-left:5px;border:1px solid #b5b2af;border-radius:5px;background:linear-gradient(#fff,#ebeae8);display:flex;align-items:center;gap:6px;padding-left:6px}
.dn{border:5px solid transparent;border-top:6px solid #111;border-bottom:0}
.toggles{display:flex;gap:2px;margin-left:6px}
.toggles b{width:28px;height:31px;border:1px solid #a5a3a0;border-radius:5px;background:#d8d7d6;box-shadow:inset 0 1px 3px #0002;display:grid;place-items:center}
.toggles svg{width:20px;height:22px}
.work{height:886px;display:grid;grid-template-columns:38px 20px 1693px 34px 38px 30px;grid-template-rows:18px 868px}
.col{grid-row:1/3;display:flex;flex-direction:column}
.tools{grid-column:1}.cmds{grid-column:5}.snaps{grid-column:6}
.col b{height:36px;flex:none;display:flex;align-items:center;justify-content:center}
.col hr{margin:0;height:2px;border:0;border-top:1px solid #dbd9d7;flex:none}
.tools svg{width:22px;height:22px}
.col .on{border:1px solid #a5a3a0;border-radius:5px;background:linear-gradient(#d5d4d3,#e2e1e0);box-shadow:inset 0 1px 3px #0002}
.tools .on{height:34px;margin:1px}
.tools .letter{position:relative}
.letter span{position:absolute;left:7px;top:7px;font:bold 23px/23px "DejaVu Sans",sans-serif;color:#000}
.cmds svg{width:16px;height:16px}
.cmds .big svg{width:22px;height:22px}
.cmds .redo svg{transform:scaleX(-1);filter:hue-rotate(50deg) saturate(.5);opacity:.3}
.tee{font:bold 22px/22px "Liberation Serif",serif;-webkit-text-stroke:.5px #000;color:#000}
.snaps b{height:28px}
.snaps svg{width:16px;height:16px}
.snaps .on{height:26px;margin:1px}
.snaps .dim{opacity:.45}
.ay{font:bold 17px "DejaVu Sans",sans-serif;color:#000}
.ay span{border-bottom:2px solid #7ab88a;line-height:14px}
.corner svg{width:13px;height:16px;display:block;margin:1px 0 0 5px}
.hruler,.vruler,.canvas{display:block}
.hruler text,.vruler text{font-size:9px;letter-spacing:-.1px;fill:#555}
.sticky b{display:grid;place-items:center;width:16px;height:16px;margin:1px;background:#fdfdfd;border:1px solid #999;border-radius:3px}
.sticky svg{width:7px;height:9px}
.canvas{background:#fff}
.vscroll i{display:block;width:5px;height:461px;margin:180px 0 0 10px;background:#f2906a;border-radius:1px}
.hstrip{height:19px;display:flex}
.hstrip i{width:785px;height:5px;margin:10px 0 0 570px;background:#f2906a;border-radius:1px}
.cms{width:15px;height:15px;margin:1px 0 0 398px;border:1px solid #aaa;border-radius:3px;background:#fff}
.cms svg{display:block;width:13px;height:13px}
.palrow{height:23px;display:flex}
.swatches{height:13px;width:1821px;margin-left:1px;display:flex;overflow:hidden}
.swatches>*{width:19px;height:13px;flex:none}
.palarrow{border:5px solid transparent;border-right-color:#333;border-left:0;margin:9px 0 0 11px;height:10px}
.palscroll{height:6px}
.palscroll i{display:block;width:404px;height:5px;margin-left:1px;background:#f2906a;border-radius:1px}
.status{height:34px;display:flex;align-items:center;flex:none}
.style{width:163px;display:grid;grid-template-columns:56px 67px 40px;grid-template-rows:17px 17px;line-height:17px;font-size:14.5px}
.style .k{text-align:right}.style .ne{padding-left:37px;font-size:12px}.style .sw{text-align:right}
.lo{width:21px;padding-left:4px}
.spin .o{padding-left:8px}
.status .spin span{padding-top:6px}
.status u{width:1px;height:34px;background:#dbd9d7;margin-left:3px}
.eye{width:17px;height:17px;margin-left:10px}
.lk{width:14px;height:19px;margin-left:14px}
.layer{width:83px;height:31px;margin-left:8px;border:1px solid #a9a7a4;border-radius:5px;background:linear-gradient(#fff,#ebeae8);display:flex;align-items:center;gap:5px;padding-left:14px;font-weight:700;font-size:12.5px;white-space:nowrap}
.msg{margin:0 0 0 3px;width:1033px;white-space:nowrap;font-size:14.67px;letter-spacing:-.21px}
.coords{width:71px;margin-left:11px;display:grid;grid-template-columns:20px 51px;line-height:17px;font-size:14.5px;letter-spacing:-.4px}
.coords span:nth-child(2n){text-align:right}
.lz{width:31px;padding-left:9px}.status .spin .z{padding-left:10px}.status .spin .r{padding-left:13px}
.lr{width:35px;padding-left:11px}
```
FILE: main.js
```js
const STEP = 9.787; // pixels per 5 mm at 52% zoom
const ORIGIN_X = 134.2;
const ORIGIN_Y = 183.4;

// Horizontal ruler
let h = '<path d="M0 17.500H1693" stroke="#4c4c4c"/>';
for (let n = -13; n < 160; n++) {
  const x = Math.floor(ORIGIN_X + n * STEP) + 0.5;
  if (x < 0 || x > 1692) continue;
  const top = n % 10 === 0 ? 0 : n % 5 === 0 ? 8 : 12;
  h += `<path d="M${x} ${top}V17" stroke="#4c4c4c"/>`;
  if (n % 10 === 0) h += `<text x="${x + 2}" y="9">${n * 5}</text>`;
}
h += '<path d="M800 12h10l-5 6z" fill="#4c4c4c"/>';
document.getElementById('hruler').innerHTML = h;

// Vertical ruler, digits stacked
let v = '<path d="M19.500 0V868" stroke="#4c4c4c"/>';
for (let n = -18; n <= 70; n++) {
  const y = Math.min(Math.floor(ORIGIN_Y + n * STEP), 867) + 0.5;
  if (y < 0) continue;
  const left = n % 10 === 0 ? 2 : n % 5 === 0 ? 10 : 14;
  v += `<path d="M${left} ${y}H19" stroke="#4c4c4c"/>`;
  if (n % 10 === 0 && n < 70) {
    const label = [...String(n * 5)];
    const xs = label.map(c => c === '-' ? 9.5 : 8).join(' ');
    const ys = label.map((c, i) => y + 8.5 + i * 7.8).join(' ');
    v += `<text x="${xs}" y="${ys}">${label.join('')}</text>`;
  }
}
v += '<path d="M14 131v10l6-5z" fill="#4c4c4c"/><path d="M10 136h5" stroke="#4c4c4c"/>';
document.getElementById('vruler').innerHTML = v;

// Page and drawing
let c = '<rect x="1433" y="315" width="3" height="588" fill="#666"/><rect x="260.500" y="900" width="1175" height="3" fill="#666"/>';
c += '<rect x="259.500" y="313.500" width="1174" height="587" fill="#fff" stroke="#666"/>';
const T = 384.5, B = 571.5, NT = 431.5, NB = 524.5;
const line = d => { c += `<path d="${d}" fill="none" stroke="#999"/>`; };
const dash = (x, y, x2, y2, colour = '#3a3ac4') => {
  c += `<path d="M${x} ${y}H${x2}V${y2}M${x} ${y}V${y2}H${x2}" fill="none" stroke="${colour}" stroke-dasharray="5 4"/>`;
};
const plates = [[314.5, 370.5, 340.5, 346.5], [570.5, 626.5, 593.5, 601.5], [847.5, 903.5, 871.5, 882.5], [1159.5, 1215.5, 1179.5, 1198.5]];
plates.forEach(([l, r, il, ir], i) => {
  c += `<rect x="${l + .5}" y="${T + .5}" width="${r - l - .5}" height="${B - T - .5}" rx="5" fill="none" stroke="#aaa"/>`;
  c += `<rect x="${il + (i === 3 ? 1 : 0)}" y="${NT}" width="${ir - il - (i === 3 ? 1 : 0)}" height="${NB - NT}" fill="none" stroke="${i === 3 ? '#777' : '#bbb'}"/>`;
  dash(l, T, r, B);
  dash(il, NT, ir, NB, '#2626a8');
});
const tabs = [[411.5, 417.5, 473.5, 0], [699.5, 707.5, 763.5, 5], [987.5, 998.5, 1054.5, 5], [1261.5, 1280.5, 1336.5, 5]];
tabs.forEach(([l, m, r, q], i) => {
  const s = i === 3 ? 1 : 0, t = T + 1, k = l + s;
  line(`M${m + q} ${t}H${r - q}Q${r} ${t} ${r} ${t + q}V${B - q}Q${r} ${B} ${r - q} ${B}H${m + q}Q${m} ${B} ${m} ${B - q}V${NB}H${k}V${NT}H${m}V${t + q}Q${m} ${t} ${m + q} ${t}`);
  dash(l, T + s, r, B + s);
});
const handle = (x, y, a) => {
  c += `<path transform="translate(${x} ${y}) rotate(${a})" d="M-6.500 0l4.500-4v2.200h4V-4l4.500 4-4.500 4V1.800h-4V4z" fill="#000"/>`;
};
[[308.5, 378.5, 45], [308.5, 578.5, -45], [306.5, 478.5, 0], [825.5, 376.5, 90], [825.5, 580.5, 90], [1342.5, 378.5, -45], [1342.5, 578.5, 45], [1344.5, 478.5, 0]].forEach(a => handle(...a));
document.getElementById('canvas').innerHTML = c;

// Colour palette
const colours = '000000 1a1a1a 333333 4d4d4d 666666 808080 999999 b3b3b3 cccccc e6e6e6 ececec f2f2f2 f9f9f9 ffffff 800000 ff0000 808000 ffff00 008000 00ff00 008080 00ffff 000080 0000ff 800080 ff00ff 2b0000 550000 800000 aa0000 d40000 ff0000 ff2a2a ff5555 ff8080 ffaaaa ffd5d5 280b0b 501616 782121 a02c2c c83737 d35f5f de8787 e9afaf f4d7d7 241c1c 483737 6c5353 916f6f ac9393 c8b7b7 e3dbdb 2b1100 552200 803300 aa4400 d45500 ff6600 ff7f2a ff9955 ffb380 ffccaa ffe6d5 28170b 502d16 784421 a05a2c c87137 d38d5f deaa87 e9c6af f4e3d7 241f1c 483e37 6c5d53 917c6f ac9d93 c8beb7 e3dedb 2b2200 554400 806600 aa8800 d4aa00 ffcc00 ffd42a ffdd55 ffe680 ffeeaa fff6d5 28220b 504416 786721 a0892c';
document.getElementById('palette').insertAdjacentHTML('beforeend', colours.split(' ').map(x => `<i style="background:#${x}"></i>`).join(''));
```
